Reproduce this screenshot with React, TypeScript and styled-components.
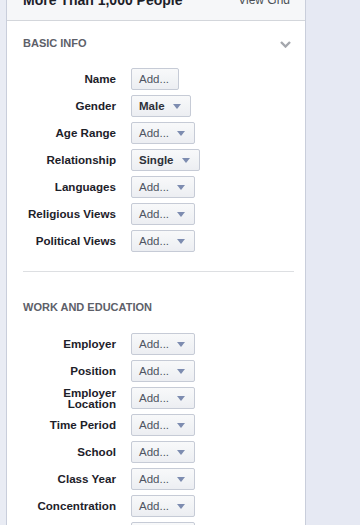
import React from "react";
import styled, { createGlobalStyle } from "styled-components";

const Global = createGlobalStyle`
  html, body { margin: 0; padding: 0; }
  body {
    background: #e6e9f3;
    font-family: "Liberation Sans", Arial, sans-serif;
    overflow: hidden;
  }
`;

const Page = styled.div`
  display: flex;
  height: 525px;
  overflow: hidden;
`;

const Gutter = styled.div`
  width: 6px;
  background: #e9ecf4;
  border-right: 1px solid #c9cedb;
  flex: none;
`;

const Panel = styled.div`
  width: 298px;
  flex: none;
  background: #fff;
  border-right: 1px solid #c9cedb;
`;

const TopBar = styled.div`
  margin-top: -20px;
  height: 40px;
  background: #f6f7f9;
  border-bottom: 1px solid #d3d6db;
  display: flex;
  align-items: center;
  justify-content: space-between;
  padding: 0 15px 0 16px;
`;

const TopTitle = styled.div`
  font-size: 14px;
  font-weight: bold;
  color: #1d2129;
`;

const TopLink = styled.div`
  font-size: 12px;
  color: #4b4f56;
`;

const Section = styled.div`
  padding: 0 11px 0 16px;
`;

const SectionHead = styled.div<{ $top: number; $bottom: number }>`
  display: flex;
  align-items: center;
  justify-content: space-between;
  padding-top: ${(p) => p.$top}px;
  padding-bottom: ${(p) => p.$bottom}px;
  height: 12px;
  box-sizing: content-box;
`;

const SectionTitle = styled.div`
  font-size: 11px;
  font-weight: bold;
  color: #5d6069;
  text-transform: uppercase;
  line-height: 12px;
`;

const Chevron = styled.svg`
  width: 11px;
  height: 7px;
  margin-right: 3px;
  margin-top: 2px;
`;

const Rows = styled.div`
  display: flex;
  flex-direction: column;
`;

const Row = styled.div`
  display: grid;
  grid-template-columns: 93px auto;
  column-gap: 15px;
  align-items: center;
  height: 27px;
`;

const Label = styled.div`
  text-align: right;
  font-size: 11.6px;
  font-weight: bold;
  color: #1d2129;
  line-height: 11px;
`;

const Button = styled.div<{ $bold?: boolean }>`
  justify-self: start;
  display: inline-flex;
  align-items: center;
  gap: 8px;
  height: 20px;
  padding: 0 9px 0 7px;
  border: 1px solid #c6cbd6;
  border-radius: 2px;
  background: linear-gradient(#f8f9fa, #eceef2);
  font-size: 11.5px;
  font-weight: ${(p) => (p.$bold ? "bold" : "normal")};
  color: ${(p) => (p.$bold ? "#2d3039" : "#4e5462")};
  box-sizing: content-box;
  margin-top: 1px;
`;

const Arrow = styled.span`
  width: 0;
  height: 0;
  border-left: 4px solid transparent;
  border-right: 4px solid transparent;
  border-top: 5px solid #7d8cb0;
  margin-top: 1px;
`;

const Divider = styled.div`
  height: 1px;
  background: #dddfe2;
  margin-top: 17px;
`;

type Field = { label: React.ReactNode; value?: string; arrow?: boolean; bold?: boolean };

const basic: Field[] = [
  { label: "Name", value: "Add...", arrow: false },
  { label: "Gender", value: "Male", arrow: true, bold: true },
  { label: "Age Range", value: "Add...", arrow: true },
  { label: "Relationship", value: "Single", arrow: true, bold: true },
  { label: "Languages", value: "Add...", arrow: true },
  { label: "Religious Views", value: "Add...", arrow: true },
  { label: "Political Views", value: "Add...", arrow: true },
];

const work: Field[] = [
  { label: "Employer", value: "Add...", arrow: true },
  { label: "Position", value: "Add...", arrow: true },
  { label: <>Employer<br />Location</>, value: "Add...", arrow: true },
  { label: "Time Period", value: "Add...", arrow: true },
  { label: "School", value: "Add...", arrow: true },
  { label: "Class Year", value: "Add...", arrow: true },
  { label: "Concentration", value: "Add...", arrow: true },
  { label: "", value: "Add...", arrow: true },
];

function FieldRows({ items }: { items: Field[] }) {
  return (
    <Rows>
      {items.map((f, i) => (
        <Row key={i}>
          <Label>{f.label}</Label>
          <Button $bold={f.bold}>
            {f.value}
            {f.arrow && <Arrow />}
          </Button>
        </Row>
      ))}
    </Rows>
  );
}

export default function App() {
  return (
    <Page>
      <Global />
      <Gutter />
      <Panel>
        <TopBar>
          <TopTitle>More Than 1,000 People</TopTitle>
          <TopLink>View Grid</TopLink>
        </TopBar>
        <Section>
          <SectionHead $top={16} $bottom={16}>
            <SectionTitle>Basic Info</SectionTitle>
            <Chevron viewBox="0 0 11 7">
              <path d="M1 1 L5.5 5.5 L10 1" fill="none" stroke="#a4a7ad" strokeWidth="2.4" />
            </Chevron>
          </SectionHead>
          <FieldRows items={basic} />
          <Divider />
          <SectionHead $top={29} $bottom={17}>
            <SectionTitle>Work and Education</SectionTitle>
          </SectionHead>
          <FieldRows items={work} />
        </Section>
      </Panel>
    </Page>
  );
}
